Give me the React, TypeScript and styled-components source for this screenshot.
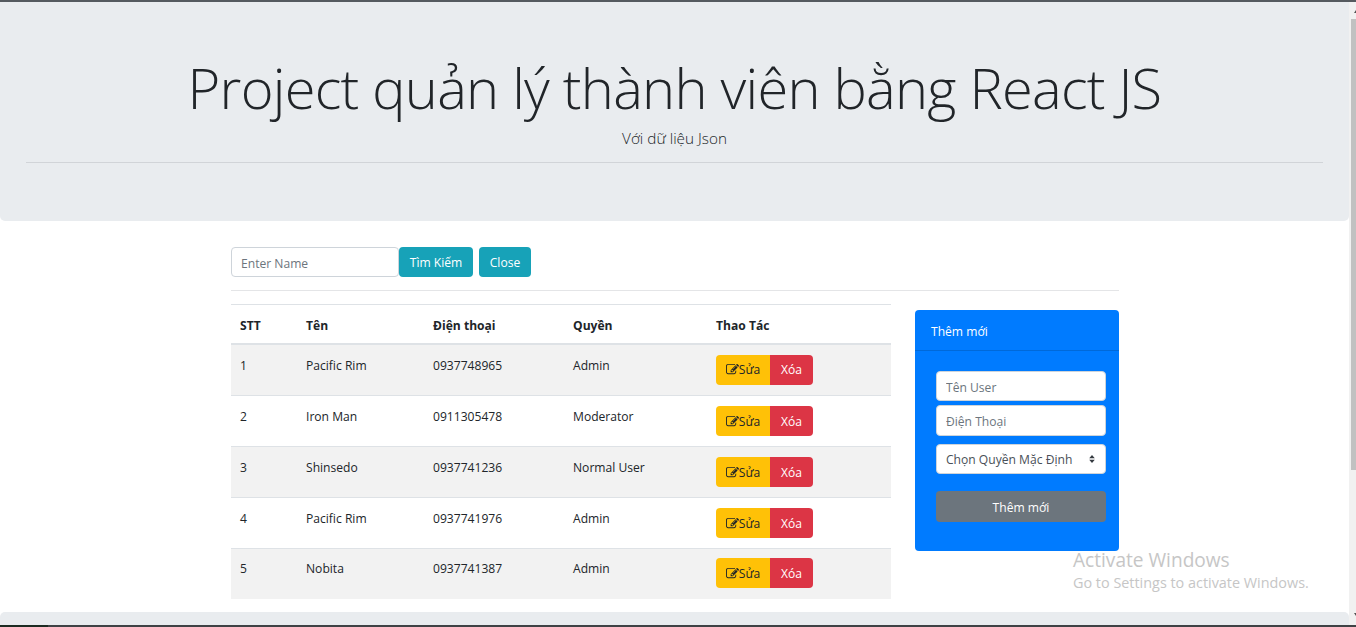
import React from 'react';
import styled, { createGlobalStyle } from 'styled-components';

const FONT = `"Open Sans", "Noto Sans", "Liberation Sans", sans-serif`;

const Global = createGlobalStyle`
  html, body {
    margin: 0;
    padding: 0;
    height: 627px;
    overflow: hidden;
    background: #fff;
  }
  * { box-sizing: border-box; }
`;

const Page = styled.div`
  position: relative;
  width: 1356px;
  height: 627px;
  overflow: hidden;
  display: flex;
  flex-direction: column;
  background: #fff;
  color: #212529;
  font-family: ${FONT};
  font-size: 12.1px;
  border-top: 2px solid #555a5f;
`;

const Jumbotron = styled.header`
  width: 1349px;
  height: 219px;
  flex: none;
  padding: 52px 26px 0;
  background: #e9ecef;
  border-radius: 0 0 5px 5px;
  text-align: center;
`;

const Title = styled.h1`
  margin: 0;
  font-size: 56px;
  font-weight: 300;
  line-height: 67px;
  color: #212529;
  letter-spacing: -0.75px;
  white-space: nowrap;
`;

const Lead = styled.p`
  margin: 6px 0 0;
  font-size: 15.3px;
  font-weight: 300;
  line-height: 22px;
`;

const Rule = styled.hr`
  margin: 13px 0 0;
  border: 0;
  border-top: 1px solid #d1d4d8;
`;

const Container = styled.main`
  width: 888px;
  margin: 26px 0 0 231px;
  flex: 1;
`;

const SearchBar = styled.div`
  display: flex;
  height: 30px;
`;

const Input = styled.input<{ $h?: number }>`
  display: block;
  height: ${p => p.$h ?? 30}px;
  padding: 2px 9px 0;
  border: 1px solid #ced4da;
  border-radius: 4px;
  background: #fff;
  font-family: ${FONT};
  font-size: 12.1px;
  color: #495057;
  outline: none;
  &::placeholder { color: #6c757d; opacity: 1; }
`;

const SearchInput = styled(Input)`
  width: 168px;
`;

const Button = styled.button<{ $bg: string; $fg?: string }>`
  height: 30px;
  padding: 0 10px;
  border: 0;
  border-radius: 4px;
  background: ${p => p.$bg};
  color: ${p => p.$fg ?? '#fff'};
  font-family: ${FONT};
  font-size: 12.1px;
  white-space: nowrap;
`;

const SearchButton = styled(Button)`
  width: 74px;
  padding: 0;
`;

const CloseButton = styled(Button)`
  width: 52px;
  margin-left: 6px;
  padding: 0;
`;

const Divider = styled.hr`
  margin: 13px 0 13px;
  border: 0;
  border-top: 1px solid #e4e5e7;
`;

const Columns = styled.div`
  display: flex;
  align-items: flex-start;
  gap: 24px;
`;

const Table = styled.table`
  width: 660px;
  flex: none;
  border-collapse: collapse;
  table-layout: fixed;
  border-top: 1px solid #dee2e6;
`;

const Th = styled.th<{ $w: number }>`
  width: ${p => p.$w}px;
  height: 39px;
  padding: 3px 0 0 9px;
  border-bottom: 2px solid #dee2e6;
  text-align: left;
  font-weight: 700;
  font-size: 12.1px;
  color: #212529;
`;

const Row = styled.tr<{ $striped: boolean }>`
  background: ${p => (p.$striped ? '#f2f2f2' : '#fff')};
`;

const Td = styled.td<{ $first?: boolean }>`
  height: ${p => (p.$first ? 52 : 51)}px;
  padding: 11px 0 0 9px;
  vertical-align: top;
  border-bottom: 1px solid #dee2e6;
  line-height: 20px;
`;

const LastTd = styled(Td)`
  border-bottom: 0;
  height: 50px;
  padding-top: 10px;
`;

const Actions = styled.div`
  display: flex;
  height: 30px;
  margin-top: -1px;
`;

const EditButton = styled(Button)`
  display: flex;
  align-items: center;
  justify-content: center;
  width: 54px;
  padding: 0;
  border-radius: 4px 0 0 4px;
  svg { width: 13px; height: 13px; flex: none; }
`;

const DeleteButton = styled(Button)`
  width: 43px;
  padding: 0;
  border-radius: 0 4px 4px 0;
`;

const Panel = styled.aside`
  width: 204px;
  height: 241px;
  flex: none;
  margin-top: 6px;
  background: #007bff;
  border-radius: 4px;
  color: #fff;
`;

const PanelHeader = styled.div`
  height: 41px;
  padding: 2px 16px 0;
  display: flex;
  align-items: center;
  border-bottom: 1px solid #0069d9;
`;

const PanelBody = styled.div`
  display: flex;
  flex-direction: column;
  padding: 20px 13px 0 21px;
`;

const PanelInput = styled(Input)`
  width: 170px;
  margin-bottom: 4px;
`;

const SelectWrap = styled.div`
  position: relative;
  width: 170px;
  height: 30px;
  margin-top: 4px;
  svg {
    position: absolute;
    right: 11px;
    top: 11px;
    width: 6px;
    height: 8px;
  }
`;

const Select = styled.select`
  display: block;
  width: 170px;
  height: 30px;
  padding: 0 9px;
  border: 1px solid #ced4da;
  border-radius: 4px;
  background: #fff;
  appearance: none;
  font-family: ${FONT};
  font-size: 12.1px;
  color: #495057;
`;

const SubmitButton = styled(Button)`
  width: 170px;
  height: 31px;
  margin-top: 17px;
  padding: 1px 0 0;
  font-weight: 500;
`;

const FooterStrip = styled.div`
  width: 1349px;
  height: 13px;
  flex: none;
  background: #e9ecef;
  border-radius: 5px 5px 0 0;
`;

const BottomEdge = styled.div`
  height: 2px;
  flex: none;
  background: #3f4245;
  &::before {
    content: '';
    display: block;
    width: 48px;
    height: 2px;
    background: #1c2b22;
  }
`;

const Watermark = styled.div`
  position: absolute;
  left: 1073px;
  top: 545px;
  color: #c6c6c6;
  pointer-events: none;
`;

const WatermarkTitle = styled.div`
  font-size: 19.1px;
  line-height: 26px;
`;

const WatermarkText = styled.div`
  font-size: 14.4px;
  line-height: 19px;
`;

const ScrollTrack = styled.div`
  position: absolute;
  top: 0;
  right: 0;
  bottom: 2px;
  width: 7px;
  background: #f1f1f1;
`;

const ScrollThumb = styled.div`
  position: absolute;
  top: 17px;
  left: 2px;
  width: 5px;
  height: 451px;
  background: #c1c1c1;
`;

const ScrollArrow = styled.div<{ $down?: boolean }>`
  position: absolute;
  left: 5px;
  width: 2px;
  height: 3px;
  background: #505050;
  ${p => (p.$down ? 'bottom: 9px;' : 'top: 8px;')}
  clip-path: ${p => (p.$down ? 'polygon(0 0, 100% 0, 100% 100%)' : 'polygon(100% 0, 100% 100%, 0 100%)')};
`;

// font-awesome 4 pencil-square-o
const PencilSquare = () => (
  <svg viewBox="0 0 1792 1792" fill="currentColor">
    <path d="M888 1184l116-116-152-152-116 116v56h96v96h56zm440-720q-16-16-33 1l-350 350q-17 17-1 33t33-1l350-350q17-17 1-33zm80 594v190q0 119-84.5 203.5t-203.5 84.5h-832q-119 0-203.5-84.5t-84.5-203.5v-832q0-119 84.5-203.5t203.5-84.5h832q63 0 117 25 15 7 18 23 3 17-9 29l-49 49q-14 14-32 8-23-6-45-6h-832q-66 0-113 47t-47 113v832q0 66 47 113t113 47h832q66 0 113-47t47-113v-126q0-13 9-22l64-64q15-15 35-7t20 29zm-96-738l288 288-672 672h-288v-288zm444 132l-92 92-288-288 92-92q28-28 68-28t68 28l152 152q28 28 28 68t-28 68z" />
  </svg>
);

const users = [
  { name: 'Pacific Rim', phone: '0937748965', role: 'Admin' },
  { name: 'Iron Man', phone: '0911305478', role: 'Moderator' },
  { name: 'Shinsedo', phone: '0937741236', role: 'Normal User' },
  { name: 'Pacific Rim', phone: '0937741976', role: 'Admin' },
  { name: 'Nobita', phone: '0937741387', role: 'Admin' },
];

export default function App() {
  return (
    <Page>
      <Global />
      <Jumbotron>
        <Title>Project quản lý thành viên bằng React JS</Title>
        <Lead>Với dữ liệu Json</Lead>
        <Rule />
      </Jumbotron>
      <Container>
        <SearchBar>
          <SearchInput placeholder="Enter Name" />
          <SearchButton $bg="#17a2b8">Tìm Kiếm</SearchButton>
          <CloseButton $bg="#17a2b8">Close</CloseButton>
        </SearchBar>
        <Divider />
        <Columns>
          <Table>
            <thead>
              <tr>
                <Th $w={66}>STT</Th>
                <Th $w={127}>Tên</Th>
                <Th $w={140}>Điện thoại</Th>
                <Th $w={143}>Quyền</Th>
                <Th $w={184}>Thao Tác</Th>
              </tr>
            </thead>
            <tbody>
              {users.map((u, i) => {
                const Cell = i === users.length - 1 ? LastTd : Td;
                return (
                  <Row key={i} $striped={i % 2 === 0}>
                    <Cell $first={i === 0}>{i + 1}</Cell>
                    <Cell $first={i === 0}>{u.name}</Cell>
                    <Cell $first={i === 0}>{u.phone}</Cell>
                    <Cell $first={i === 0}>{u.role}</Cell>
                    <Cell $first={i === 0}>
                      <Actions>
                        <EditButton $bg="#ffc107" $fg="#212529"><PencilSquare />Sửa</EditButton>
                        <DeleteButton $bg="#dc3545">Xóa</DeleteButton>
                      </Actions>
                    </Cell>
                  </Row>
                );
              })}
            </tbody>
          </Table>
          <Panel>
            <PanelHeader>Thêm mới</PanelHeader>
            <PanelBody>
              <PanelInput placeholder="Tên User" />
              <PanelInput $h={31} placeholder="Điện Thoại" />
              <SelectWrap>
                <Select defaultValue="0">
                  <option value="0">Chọn Quyền Mặc Định</option>
                  <option value="1">Admin</option>
                  <option value="2">Moderator</option>
                  <option value="3">Normal User</option>
                </Select>
                <svg viewBox="0 0 7 10"><path d="M3.5 0 7 4H0zM3.5 10 0 6h7z" fill="#343a40" /></svg>
              </SelectWrap>
              <SubmitButton $bg="#6c757d">Thêm mới</SubmitButton>
            </PanelBody>
          </Panel>
        </Columns>
      </Container>
      <FooterStrip />
      <BottomEdge />
      <Watermark>
        <WatermarkTitle>Activate Windows</WatermarkTitle>
        <WatermarkText>Go to Settings to activate Windows.</WatermarkText>
      </Watermark>
      <ScrollTrack>
        <ScrollArrow />
        <ScrollThumb />
        <ScrollArrow $down />
      </ScrollTrack>
    </Page>
  );
}
